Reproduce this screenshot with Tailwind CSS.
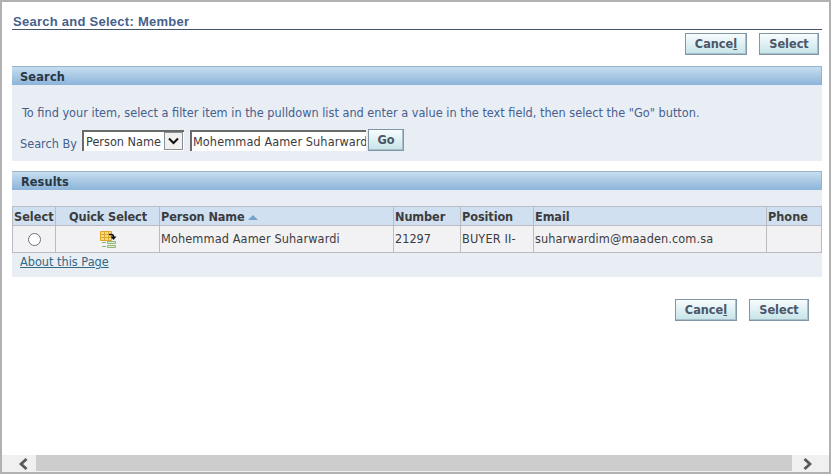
<!DOCTYPE html>
<html lang="en">
<head>
<meta charset="utf-8">
<title>Search and Select: Member</title>
<script src="https://cdn.jsdelivr.net/npm/@tailwindcss/browser@4"></script>
</head>
<body class="h-[474px] w-[831px] overflow-hidden bg-white font-['DejaVu_Sans_Condensed','DejaVu_Sans',sans-serif] text-[12.6px] leading-[16px] text-[#3c3c3e]">
<div class="flex h-full w-full flex-col border-2 border-[#b1b1b1]">
  <main class="flex flex-1 flex-col pr-[7px] pl-[10px]">
    <header class="h-[28px] border-b border-[#44566c] pt-[12px] pl-px font-['Liberation_Sans',sans-serif] text-[13px] font-bold tracking-[0.26px] whitespace-nowrap text-[#47618c]">Search and Select: Member</header>
    <div class="mt-[3px] flex h-[22px] justify-end gap-3 pr-[3px] font-bold text-[#4b5668]">
      <button class="w-[62px] border border-[#8095a6] bg-linear-to-b from-[#f8fcfd] to-[#c5e4e9] pb-px shadow-[inset_-1px_-1px_0_#a9bfca]">Cance<span class="underline">l</span></button>
      <button class="w-[60px] border border-[#8095a6] bg-linear-to-b from-[#f8fcfd] to-[#c5e4e9] pb-px shadow-[inset_-1px_-1px_0_#a9bfca]">Select</button>
    </div>
    <section class="mt-[11px] h-[95px] bg-[#e9eef5]">
      <h2 class="h-[19px] border-t border-r border-[#98b3cc] bg-linear-to-b from-[#c7ddee] to-[#8cb4da] pt-[2px] pl-[8px] font-bold tracking-[0.2px] text-[#293744]">Search</h2>
      <p class="mt-5 pl-[10px] whitespace-nowrap text-[#46608f]">To find your item, select a filter item in the pulldown list and enter a value in the text field, then select the "Go" button.</p>
      <div class="mt-[8px] flex h-[23px] items-start pl-2">
        <label class="w-[62px] pt-[7px] whitespace-nowrap text-[#46608f]">Search By</label>
        <div class="mt-[1px] flex h-[21px] w-[102px] border-t-2 border-l-2 border-[#6a6a6a] bg-white">
          <span class="w-[80px] pt-[2px] pl-[2px] whitespace-nowrap">Person Name</span>
          <span class="flex h-[18px] w-[19px] items-center justify-center border border-[#8b8f94] bg-[#f0f0f0]"><svg width="11" height="8" viewBox="0 0 11 8"><path d="M1 1.5L5.5 6L10 1.5" fill="none" stroke="#111" stroke-width="2"/></svg></span>
        </div>
        <div class="mt-[1px] ml-[6px] h-[21px] w-[176px] overflow-hidden border-t-2 border-l-2 border-[#6a6a6a] bg-white pt-[2px] pl-px tracking-[0.08px] whitespace-nowrap">Mohemmad Aamer Suharwardi</div>
        <button class="ml-[2px] h-[22px] w-[36px] border border-[#8095a6] bg-linear-to-b from-[#f8fcfd] to-[#c5e4e9] font-bold text-[#4b5668] shadow-[inset_-1px_-1px_0_#a9bfca]">Go</button>
      </div>
    </section>
    <section class="mt-[10px] h-[106px] bg-[#e9eef5]">
      <h2 class="h-[19px] border-t border-r border-[#98b3cc] bg-linear-to-b from-[#c7ddee] to-[#8cb4da] pt-[2px] pl-[9px] font-bold tracking-[0.1px] text-[#293744]">Results</h2>
      <div class="mt-[16px] grid grid-cols-[43px_104px_234px_67px_73px_233px_56px] grid-rows-[19px_27px] border-t border-[#b9bfc8] whitespace-nowrap *:border-b *:border-l *:border-[#b9bcc2] *:pl-px">
        <div class="bg-[#d0e0f0] pt-[2px] font-bold">Select</div>
        <div class="bg-[#d0e0f0] pt-[2px] text-center font-bold tracking-[-0.1px]">Quick Select</div>
        <div class="flex items-start bg-[#d0e0f0] pt-[2px] font-bold tracking-[-0.1px]">Person Name<svg class="mt-[6px] ml-[3px]" width="10" height="5" viewBox="0 0 10 5"><path d="M0 5L5 0L10 5Z" fill="#75a2c8"/></svg></div>
        <div class="bg-[#d0e0f0] pt-[2px] font-bold tracking-[-0.1px]">Number</div>
        <div class="bg-[#d0e0f0] pt-[2px] font-bold tracking-[-0.1px]">Position</div>
        <div class="bg-[#d0e0f0] pt-[2px] font-bold tracking-[-0.1px]">Email</div>
        <div class="border-r bg-[#d0e0f0] pt-[2px] font-bold">Phone</div>
        <div class="flex items-center justify-center bg-[#f2f2f5]"><span class="mt-px block size-[13px] rounded-full border border-[#707070] bg-white"></span></div>
        <div class="flex items-start justify-center bg-[#f2f2f5] pt-[5px]">
          <svg width="17" height="17" viewBox="0 0 17 17">
            <path d="M1 1h10v8H1z" fill="#f7dc83"/>
            <path d="M0.5 0.5h11v9h-11zM0.5 3.5h11M0.5 6.5h11M4.5 0v9M8.5 0v9" fill="none" stroke="#dca72d"/>
            <path d="M7.5 10.5h8v2h-8zM7.5 14.5h8v2h-8z" fill="#e1f0d2" stroke="#8fb77a"/>
            <path d="M2 11.5h4M2 15.5h4" stroke="#8fb77a"/>
            <path d="M9 3.5h2.5Q13.5 3.5 13.5 6" fill="none" stroke="#111" stroke-width="1.5"/>
            <path d="M10.5 5.5h6L13.5 9z" fill="#111"/>
          </svg>
        </div>
        <div class="bg-[#f2f2f5] pt-[5px] tracking-[0.12px]">Mohemmad Aamer Suharwardi</div>
        <div class="bg-[#f2f2f5] pt-[5px]">21297</div>
        <div class="bg-[#f2f2f5] pt-[5px] tracking-[0.15px]">BUYER II-</div>
        <div class="bg-[#f2f2f5] pt-[5px] tracking-[0.1px]">suharwardim@maaden.com.sa</div>
        <div class="border-r bg-[#f2f2f5]"></div>
      </div>
      <a class="mt-px ml-2 inline-block text-[#316a87] underline">About this Page</a>
    </section>
    <div class="mt-[22px] flex h-[22px] justify-end gap-3 pr-[13px] font-bold text-[#4b5668]">
      <button class="w-[62px] border border-[#8095a6] bg-linear-to-b from-[#f8fcfd] to-[#c5e4e9] pb-px shadow-[inset_-1px_-1px_0_#a9bfca]">Cance<span class="underline">l</span></button>
      <button class="w-[60px] border border-[#8095a6] bg-linear-to-b from-[#f8fcfd] to-[#c5e4e9] pb-px shadow-[inset_-1px_-1px_0_#a9bfca]">Select</button>
    </div>
  </main>
  <footer class="flex h-[17px] bg-[#f0f0f0]">
    <span class="flex w-[34px] items-center justify-end pr-[8px]"><svg width="9" height="12" viewBox="0 0 9 12"><path d="M7.5 1L2 6L7.5 11" fill="none" stroke="#585858" stroke-width="2.8"/></svg></span>
    <span class="mb-px w-[756px] bg-[#cdcdcd]"></span>
    <span class="flex items-center pl-[11px]"><svg width="9" height="12" viewBox="0 0 9 12"><path d="M1.5 1L7 6L1.5 11" fill="none" stroke="#585858" stroke-width="2.8"/></svg></span>
  </footer>
</div>
</body>
</html>
